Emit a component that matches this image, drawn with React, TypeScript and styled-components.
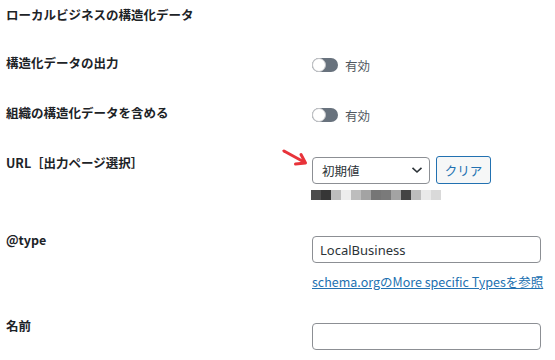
import React, { FC } from "react"
import styled, { createGlobalStyle } from "styled-components"

const GlobalStyle = createGlobalStyle`
  body {
    margin: 0;
    background: #fff;
    color: #1d2327;
    font-family: "Noto Sans CJK JP", sans-serif;
  }
`

const Page = styled.div`
  padding: 0 6px;
  width: 555px;
  box-sizing: border-box;
`

const Title = styled.h2`
  margin: 0 0 10px;
  padding-top: 6px;
  height: 18px;
  font-size: 12.5px;
  font-weight: 700;
  line-height: 18px;
`

const Row = styled.div<{ $bottom: number }>`
  display: grid;
  grid-template-columns: 306px 1fr;
  padding-bottom: ${({ $bottom }) => $bottom}px;
`

const Label = styled.div`
  padding-top: 20px;
  height: 18px;
  font-size: 12.5px;
  font-weight: 700;
  line-height: 18px;
`

const Field = styled.div<{ $top: number }>`
  padding-top: ${({ $top }) => $top}px;
  display: flex;
  flex-direction: column;
  align-items: flex-start;
  position: relative;
`

const ToggleLine = styled.label`
  display: flex;
  align-items: center;
  gap: 7px;
  height: 20px;
  font-size: 12.5px;
  color: #50575e;
`

const Track = styled.span`
  position: relative;
  width: 26px;
  height: 14px;
  border-radius: 7px;
  background: #68727d;
`

const Knob = styled.span`
  position: absolute;
  left: 0;
  top: 0;
  width: 14px;
  height: 14px;
  box-sizing: border-box;
  border-radius: 50%;
  background: #fff;
  border: 1px solid #c3c4c7;
`

const Controls = styled.div`
  display: flex;
  gap: 6px;
  align-items: center;
`

const Select = styled.div`
  width: 118px;
  height: 27px;
  box-sizing: border-box;
  border: 1px solid #8c8f94;
  border-radius: 4px;
  display: flex;
  align-items: center;
  justify-content: space-between;
  padding: 0 6px 0 9px;
  font-size: 12.5px;
  color: #2c3338;
`

const ClearButton = styled.button`
  width: 55px;
  height: 28px;
  box-sizing: border-box;
  border: 1px solid #2271b1;
  border-radius: 3px;
  background: #f6f7f7;
  color: #2271b1;
  font-size: 12.5px;
  font-family: "Noto Sans CJK JP", sans-serif;
  padding: 0;
`

const Mosaic = styled.div`
  display: flex;
  margin-top: 6px;
  margin-left: -1px;
`

const Cell = styled.span<{ $c: string }>`
  width: 10px;
  height: 10px;
  background: ${({ $c }) => $c};
`

const Input = styled.div`
  width: 229px;
  height: 27px;
  box-sizing: border-box;
  border: 1px solid #8c8f94;
  border-radius: 4px;
  display: flex;
  align-items: center;
  padding: 0 7px;
  font-size: 13px;
  color: #2c3338;
  font-family: "Noto Sans", sans-serif;
`

const TypeLink = styled.a`
  margin-top: 11px;
  height: 16px;
  line-height: 16px;
  font-size: 12.5px;
  color: #2271b1;
  text-decoration: underline;
  white-space: nowrap;
`

const Arrow = styled.svg`
  position: absolute;
  left: -31px;
  top: 14px;
`

const mosaic = [
  "#4d4d4d", "#363636", "#bdbdbd", "#ededed", "#bdbdbd", "#a3a3a3", "#767676",
  "#7a7a7a", "#a3a3a3", "#444444", "#bdbdbd", "#e9e9e9", "#d9d9d9",
]

const Toggle: FC = () => (
  <ToggleLine>
    <Track>
      <Knob />
    </Track>
    有効
  </ToggleLine>
)

const App: FC = () => (
  <Page>
    <GlobalStyle />
    <Title>ローカルビジネスの構造化データ</Title>

    <Row $bottom={9}>
      <Label>構造化データの出力</Label>
      <Field $top={21}>
        <Toggle />
      </Field>
    </Row>

    <Row $bottom={9}>
      <Label>組織の構造化データを含める</Label>
      <Field $top={21}>
        <Toggle />
      </Field>
    </Row>

    <Row $bottom={11}>
      <Label>URL［出力ページ選択］</Label>
      <Field $top={22}>
        <Arrow width="28" height="20" viewBox="0 0 28 20">
          <path d="M3 3 L23 14" stroke="#e8333a" strokeWidth="3" strokeLinecap="round" fill="none" />
          <path d="M14.5 16 L24.5 15 L20 6.5" stroke="#e8333a" strokeWidth="3" strokeLinecap="round" strokeLinejoin="round" fill="none" />
        </Arrow>
        <Controls>
          <Select>
            初期値
            <svg width="12" height="8" viewBox="0 0 12 8">
              <path d="M1.5 1.8 L6 6 L10.5 1.8" stroke="#2c3338" strokeWidth="1.6" fill="none" />
            </svg>
          </Select>
          <ClearButton>クリア</ClearButton>
        </Controls>
        <Mosaic>
          {mosaic.map((c, i) => (
            <Cell key={i} $c={c} />
          ))}
        </Mosaic>
      </Field>
    </Row>

    <Row $bottom={7}>
      <Label>@type</Label>
      <Field $top={25}>
        <Input>LocalBusiness</Input>
        <TypeLink href="#">schema.orgのMore specific Typesを参照</TypeLink>
      </Field>
    </Row>

    <Row $bottom={10}>
      <Label>名前</Label>
      <Field $top={26}>
        <Input />
      </Field>
    </Row>
  </Page>
)

export default App
